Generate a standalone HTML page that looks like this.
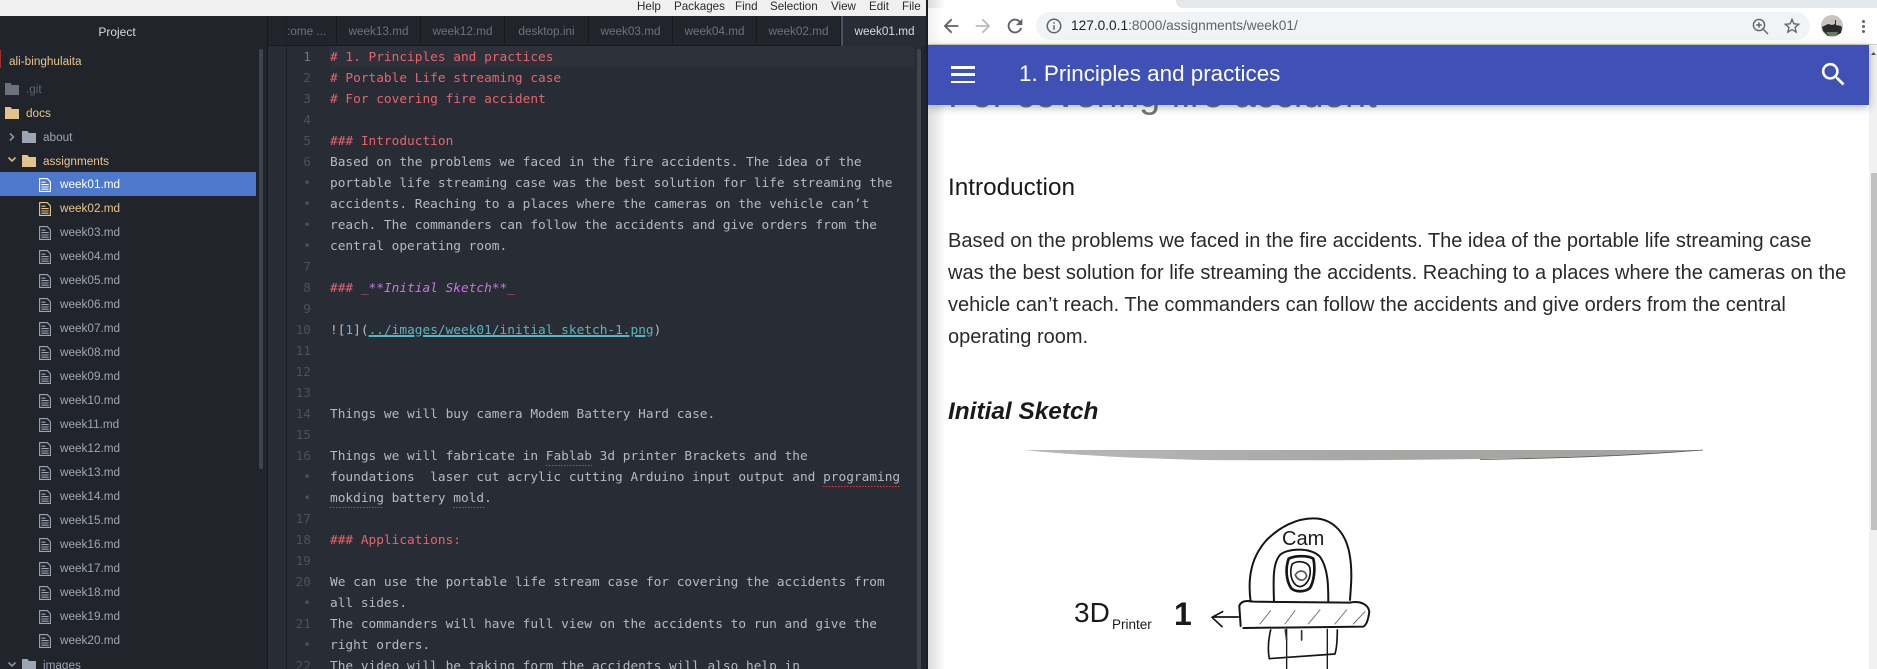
<!DOCTYPE html>
<html><head><meta charset="utf-8"><title>week01</title>
<style>
html,body{margin:0;padding:0;width:1877px;height:669px;overflow:hidden;background:#fff}
*{box-sizing:border-box}
.a{position:absolute}
#root{position:relative;width:1877px;height:669px;overflow:hidden;font-family:"Liberation Sans",sans-serif}
.menu{position:absolute;top:0;height:16px;line-height:13px;font-size:11.6px;color:#2b2b2b;white-space:nowrap}
.tab{position:absolute;top:16px;height:30px;line-height:31px;font-size:11.75px;color:#6b717d;text-align:center;border-right:1px solid #181a1f;white-space:nowrap;overflow:hidden}
.tr{position:absolute;height:24px;line-height:26px;font-size:11.75px;color:#9da5b4;white-space:nowrap}
.tr svg{position:absolute}
#code{position:absolute;left:330px;top:47px;font-family:"DejaVu Sans Mono","Liberation Mono",monospace;font-size:12.8px;line-height:21px;color:#b3bac7;white-space:pre}
#nums{position:absolute;left:287px;top:47px;width:24px;text-align:right;font-family:"DejaVu Sans Mono","Liberation Mono",monospace;font-size:12.8px;line-height:21px;color:#495162;white-space:pre}
.h{color:#e8636e}.p{color:#c678dd}.i{font-style:italic}.l{color:#56b6c2;text-decoration:underline;text-decoration-thickness:2px}.b{color:#61afef}
.s{display:inline-block;height:21px;vertical-align:top;background:repeating-linear-gradient(90deg,#e5383b 0 1.5px,transparent 1.5px 3px) 0 19px/100% 1px no-repeat}
.d{color:#495162;font-size:12.8px}
.ic{position:absolute}
p,h1,h3{margin:0;padding:0}
</style></head><body>
<div id="root">
<svg width="0" height="0" style="position:absolute"><defs>
<symbol id="file" viewBox="0 0 12 14"><path d="M.6.6h7.6l3.2 3.2v9.6H.6z M2.4 4.2h4.2 M2.4 6.6h7.2 M2.4 9h7.2 M2.4 11.2h7.2" fill="none" stroke="currentColor" stroke-width="1.1"/></symbol>
<symbol id="folder" viewBox="0 0 14 12"><path d="M0 0h5.5l1.5 2h7v10H0z" fill="currentColor"/></symbol>
</defs></svg>

<!-- left window -->
<div class="a" style="left:0;top:0;width:926px;height:16px;background:#f0f0f0"></div>
<div class="a" style="left:926px;top:0;width:2px;height:669px;background:#1c1c22"></div>
<div class="menu" style="left:637px">Help</div>
<div class="menu" style="left:674px">Packages</div>
<div class="menu" style="left:735px">Find</div>
<div class="menu" style="left:770px">Selection</div>
<div class="menu" style="left:831px">View</div>
<div class="menu" style="left:869px">Edit</div>
<div class="menu" style="left:902px">File</div>

<div class="a" style="left:0;top:16px;width:267px;height:653px;background:#21252b"></div>
<div class="a" style="left:267px;top:16px;width:659px;height:653px;background:#282c34"></div>
<div class="a" style="left:267px;top:16px;width:659px;height:30px;background:#21252b;border-bottom:1px solid #181a1f"></div>
<div class="a" style="left:267px;top:16px;width:1px;height:653px;background:#181a1f"></div>
<div class="a" style="left:286px;top:16px;width:1px;height:653px;background:#1d2026"></div>
<div class="a" style="left:921px;top:46px;width:5px;height:623px;background:#22252c"></div>

<!-- tabs -->
<div class="tab" style="left:287px;width:50px;text-align:left;text-indent:0"><span style="margin-left:0">:ome ...</span></div>
<div class="tab" style="left:337px;width:84px">week13.md</div>
<div class="tab" style="left:421px;width:84px">week12.md</div>
<div class="tab" style="left:505px;width:84px">desktop.ini</div>
<div class="tab" style="left:589px;width:84px">week03.md</div>
<div class="tab" style="left:673px;width:84px">week04.md</div>
<div class="tab" style="left:757px;width:84px">week02.md</div>
<div class="tab" style="left:841px;width:85px;background:#282c34;color:#d7dae0;border-right:0;border-left:2px solid #4b5263">week01.md</div>

<!-- tree -->
<div class="a" style="left:0;top:16px;width:267px;height:30px;line-height:32px;text-align:center;font-size:12px;color:#d7dae0;padding-right:33px">Project</div>
<div class="a" style="left:0;top:50px;width:1px;height:18px;background:#a03030"></div>
<div class="tr" style="left:9px;top:49px;color:#e8c58a">ali-binghulaita</div>
<div class="a" style="left:259px;top:49px;width:4px;height:420px;background:#3f4550;border-radius:2px"></div>

<svg class="ic" style="left:5px;top:83px;color:#6b717d" width="14" height="12"><use href="#folder"/></svg>
<div class="tr" style="left:26px;top:77px;color:#5c6370">.git</div>
<svg class="ic" style="left:5px;top:107px;color:#e3c28c" width="14" height="12"><use href="#folder"/></svg>
<div class="tr" style="left:26px;top:101px;color:#e8c58a">docs</div>
<svg class="ic" style="left:22px;top:131px;color:#9da5b4" width="14" height="12"><use href="#folder"/></svg>
<svg class="ic" style="left:8px;top:132px" width="8" height="10"><path d="M2 1.5l3.5 3.5L2 8.5" fill="none" stroke="#8a93a3" stroke-width="1.6"/></svg>
<div class="tr" style="left:43px;top:125px">about</div>
<svg class="ic" style="left:22px;top:155px;color:#e3c28c" width="14" height="12"><use href="#folder"/></svg>
<svg class="ic" style="left:7px;top:156px" width="10" height="8"><path d="M1.5 1.5L5 5l3.5-3.5" fill="none" stroke="#d8b878" stroke-width="1.6"/></svg>
<div class="tr" style="left:43px;top:149px;color:#e8c58a">assignments</div>

<div class="a" style="left:0;top:172px;width:256px;height:24px;background:#4d78cc"></div>
<svg class="ic" style="left:39px;top:178px;color:#fff" width="12" height="14"><use href="#file"/></svg>
<div class="tr" style="left:60px;top:172px;color:#fff">week01.md</div>
<svg class="ic" style="left:39px;top:202px;color:#e8c58a" width="12" height="14"><use href="#file"/></svg>
<div class="tr" style="left:60px;top:196px;color:#e8c58a">week02.md</div>
<svg class="ic" style="left:39px;top:226px" width="12" height="14" color="#9da5b4"><use href="#file"/></svg><div class="tr" style="left:60px;top:220px">week03.md</div>
<svg class="ic" style="left:39px;top:250px" width="12" height="14" color="#9da5b4"><use href="#file"/></svg><div class="tr" style="left:60px;top:244px">week04.md</div>
<svg class="ic" style="left:39px;top:274px" width="12" height="14" color="#9da5b4"><use href="#file"/></svg><div class="tr" style="left:60px;top:268px">week05.md</div>
<svg class="ic" style="left:39px;top:298px" width="12" height="14" color="#9da5b4"><use href="#file"/></svg><div class="tr" style="left:60px;top:292px">week06.md</div>
<svg class="ic" style="left:39px;top:322px" width="12" height="14" color="#9da5b4"><use href="#file"/></svg><div class="tr" style="left:60px;top:316px">week07.md</div>
<svg class="ic" style="left:39px;top:346px" width="12" height="14" color="#9da5b4"><use href="#file"/></svg><div class="tr" style="left:60px;top:340px">week08.md</div>
<svg class="ic" style="left:39px;top:370px" width="12" height="14" color="#9da5b4"><use href="#file"/></svg><div class="tr" style="left:60px;top:364px">week09.md</div>
<svg class="ic" style="left:39px;top:394px" width="12" height="14" color="#9da5b4"><use href="#file"/></svg><div class="tr" style="left:60px;top:388px">week10.md</div>
<svg class="ic" style="left:39px;top:418px" width="12" height="14" color="#9da5b4"><use href="#file"/></svg><div class="tr" style="left:60px;top:412px">week11.md</div>
<svg class="ic" style="left:39px;top:442px" width="12" height="14" color="#9da5b4"><use href="#file"/></svg><div class="tr" style="left:60px;top:436px">week12.md</div>
<svg class="ic" style="left:39px;top:466px" width="12" height="14" color="#9da5b4"><use href="#file"/></svg><div class="tr" style="left:60px;top:460px">week13.md</div>
<svg class="ic" style="left:39px;top:490px" width="12" height="14" color="#9da5b4"><use href="#file"/></svg><div class="tr" style="left:60px;top:484px">week14.md</div>
<svg class="ic" style="left:39px;top:514px" width="12" height="14" color="#9da5b4"><use href="#file"/></svg><div class="tr" style="left:60px;top:508px">week15.md</div>
<svg class="ic" style="left:39px;top:538px" width="12" height="14" color="#9da5b4"><use href="#file"/></svg><div class="tr" style="left:60px;top:532px">week16.md</div>
<svg class="ic" style="left:39px;top:562px" width="12" height="14" color="#9da5b4"><use href="#file"/></svg><div class="tr" style="left:60px;top:556px">week17.md</div>
<svg class="ic" style="left:39px;top:586px" width="12" height="14" color="#9da5b4"><use href="#file"/></svg><div class="tr" style="left:60px;top:580px">week18.md</div>
<svg class="ic" style="left:39px;top:610px" width="12" height="14" color="#9da5b4"><use href="#file"/></svg><div class="tr" style="left:60px;top:604px">week19.md</div>
<svg class="ic" style="left:39px;top:634px" width="12" height="14" color="#9da5b4"><use href="#file"/></svg><div class="tr" style="left:60px;top:628px">week20.md</div>
<svg class="ic" style="left:22px;top:659px;color:#9da5b4" width="14" height="12"><use href="#folder"/></svg>
<svg class="ic" style="left:7px;top:661px" width="10" height="8"><path d="M1.5 1.5L5 5l3.5-3.5" fill="none" stroke="#8a93a3" stroke-width="1.6"/></svg>
<div class="tr" style="left:43px;top:653px">images</div>

<!-- editor -->
<div class="a" style="left:330px;top:46px;width:584px;height:21px;background:#2c313a"></div>
<div class="a" style="left:917px;top:49px;width:4px;height:620px;background:#3f4550;border-radius:2px"></div>
<div id="nums"><span style="color:#6f7786">1</span>
2
3
4
5
6
<span class="d">•</span>
<span class="d">•</span>
<span class="d">•</span>
<span class="d">•</span>
7
8
9
10
11
12
13
14
15
16
<span class="d">•</span>
<span class="d">•</span>
17
18
19
20
<span class="d">•</span>
21
<span class="d">•</span>
22</div>
<div id="code"><span class="h"># 1. Principles and practices</span>
<span class="h"># Portable Life streaming case</span>
<span class="h"># For covering fire accident</span>

<span class="h">### Introduction</span>
Based on the problems we faced in the fire accidents. The idea of the
portable life streaming case was the best solution for life streaming the
accidents. Reaching to a places where the cameras on the vehicle can’t
reach. The commanders can follow the accidents and give orders from the
central operating room.

<span class="h">### _</span><span class="p">**</span><span class="p i">Initial Sketch</span><span class="p">**</span><span class="h">_</span>

![<span class="b">1</span>](<span class="l">../images/week01/initial_sketch-1.png</span>)



Things we will buy camera Modem Battery Hard case.

Things we will fabricate in <span class="s">Fablab</span> 3d printer Brackets and the
foundations  laser cut acrylic cutting Arduino input output and <span class="s">programing</span>
<span class="s">mokding</span> battery <span class="s">mold</span>.

<span class="h">### Applications:</span>

We can use the portable life stream case for covering the accidents from
all sides.
The commanders will have full view on the accidents to run and give the
right orders.
The video will be taking form the accidents will also help in</div>

<!-- browser -->
<div class="a" style="left:928px;top:0;width:949px;height:669px;background:#fff;overflow:hidden">
  <div class="a" style="left:0;top:0;width:17px;height:669px;background:linear-gradient(90deg,#dcdcdc,#f2f2f2 70%,#fff)"></div>
  <div class="a" style="left:248px;top:0;width:701px;height:8px;background:#e5e8eb;border-bottom-left-radius:7px"></div>
  <div class="a" style="left:0;top:8px;width:949px;height:36px;background:linear-gradient(90deg,#f0f0f0,#fff 14px)"></div>
  <div class="a" style="left:0;top:44px;width:949px;height:1px;background:#cfcfcf"></div>
  <div class="a" style="left:108px;top:12px;width:774px;height:28px;background:#f1f3f4;border-radius:14px"></div>
  <svg class="a" style="left:12px;top:15px" width="22" height="22" viewBox="0 0 24 24"><path d="M20 11H7.83l5.59-5.59L12 4l-8 8 8 8 1.41-1.41L7.83 13H20z" fill="#5f6368"/></svg>
  <svg class="a" style="left:44px;top:15px" width="22" height="22" viewBox="0 0 24 24"><path d="M12 4l-1.41 1.41L16.17 11H4v2h12.17l-5.58 5.59L12 20l8-8z" fill="#b9bbbe"/></svg>
  <svg class="a" style="left:76px;top:15px" width="22" height="22" viewBox="0 0 24 24"><path d="M17.65 6.35A7.96 7.96 0 0 0 12 4a8 8 0 1 0 7.73 10h-2.08A6 6 0 1 1 12 6c1.66 0 3.14.69 4.22 1.78L13 11h7V4z" fill="#5f6368"/></svg>
  <svg class="a" style="left:117px;top:17px" width="18" height="18" viewBox="0 0 24 24"><path d="M11 7h2v2h-2zm0 4h2v6h-2zm1-9a10 10 0 1 0 0 20 10 10 0 0 0 0-20zm0 18a8 8 0 1 1 0-16 8 8 0 0 1 0 16z" fill="#5f6368"/></svg>
  <div class="a" style="left:143px;top:17px;font-size:13.7px;line-height:18px;color:#5f6368;white-space:nowrap"><span style="color:#202124">127.0.0.1</span>:8000/assignments/week01/</div>
  <svg class="a" style="left:823px;top:17px" width="19" height="19" viewBox="0 0 19 19"><circle cx="8" cy="8" r="5.6" fill="none" stroke="#5f6368" stroke-width="1.4"/><path d="M12 12l5 5M8 5.2v5.6M5.2 8h5.6" stroke="#5f6368" stroke-width="1.4" fill="none"/></svg>
  <svg class="a" style="left:854px;top:16px" width="20" height="20" viewBox="0 0 24 24"><path d="M22 9.24l-7.19-.62L12 2 9.19 8.63 2 9.24l5.46 4.73L5.82 21 12 17.27 18.18 21l-1.63-7.03L22 9.24zM12 15.4l-3.76 2.27 1-4.28-3.32-2.88 4.38-.38L12 6.1l1.71 4.04 4.38.38-3.32 2.88 1 4.28L12 15.4z" fill="#5f6368"/></svg>
  <svg class="a" style="left:893px;top:15px" width="22" height="22" viewBox="0 0 22 22"><circle cx="11" cy="11" r="11" fill="#c9c3c0"/><path d="M1 12l6-3 4 1 3-1v-4l1 0v5l5 1 1 2-1 5-6 3H7l-5-5z" fill="#2a2a2a"/><path d="M5 17h12l-2 4H8z" fill="#6b7a66"/></svg>
  <div class="a" style="left:934px;top:20px;width:3.4px;height:3.4px;border-radius:50%;background:#5f6368"></div>
  <div class="a" style="left:934px;top:25px;width:3.4px;height:3.4px;border-radius:50%;background:#5f6368"></div>
  <div class="a" style="left:934px;top:30px;width:3.4px;height:3.4px;border-radius:50%;background:#5f6368"></div>

  <div class="a" style="left:941px;top:45px;width:8px;height:624px;background:#f1f1f1"></div>
  <div class="a" style="left:943px;top:173px;width:6px;height:357px;background:#c1c1c1"></div>
  <svg class="a" style="left:942px;top:50px" width="7" height="6"><path d="M1 5l2.5-3L6 5z" fill="#505050"/></svg>

  <div class="a" style="left:20px;top:73px;font-size:38.2px;line-height:44px;color:#757575;white-space:nowrap">For covering fire accident</div>
  <div class="a" style="left:0;top:45px;width:941px;height:60px;background:#3f51b5;box-shadow:0 2px 8px rgba(0,0,0,.32)"></div>
  <div class="a" style="left:23px;top:66px;width:24px;height:2.5px;background:#fff"></div>
  <div class="a" style="left:23px;top:73px;width:24px;height:2.5px;background:#fff"></div>
  <div class="a" style="left:23px;top:80.5px;width:24px;height:2.5px;background:#fff"></div>
  <div class="a" style="left:91px;top:60px;font-size:22.4px;line-height:28px;color:#fff;white-space:nowrap">1. Principles and practices</div>
  <svg class="a" style="left:890px;top:59px" width="31" height="31" viewBox="0 0 24 24"><path d="M15.5 14h-.79l-.28-.27A6.471 6.471 0 0 0 16 9.5 6.5 6.5 0 1 0 9.5 16c1.61 0 3.09-.59 4.23-1.57l.27.28v.79l5 4.99L20.49 19l-4.99-5zm-6 0C7.01 14 5 11.99 5 9.5S7.01 5 9.5 5 14 7.01 14 9.5 11.99 14 9.5 14z" fill="#fff"/></svg>

  <div class="a" style="left:20px;top:171px;font-size:24.3px;line-height:34px;color:#1a1a1a;white-space:nowrap">Introduction</div>
  <div class="a" style="left:20px;top:225px;font-size:20px;line-height:32px;color:#2a2a2a;white-space:nowrap">Based on the problems we faced in the fire accidents. The idea of the portable life streaming case<br>was the best solution for life streaming the accidents. Reaching to a places where the cameras on the<br>vehicle can’t reach. The commanders can follow the accidents and give orders from the central<br>operating room.</div>
  <div class="a" style="left:20px;top:395px;font-size:24.4px;line-height:34px;font-weight:bold;font-style:italic;color:#1a1a1a;white-space:nowrap">Initial Sketch</div>
</div>

<!-- sketch -->
<svg class="a" style="left:0;top:0" width="1877" height="669" viewBox="0 0 1877 669">
  <defs><linearGradient id="g" x1="0" x2="1" y1="0" y2="0"><stop offset="0" stop-color="#b8b8b8"/><stop offset=".5" stop-color="#a9a7a5"/><stop offset="1" stop-color="#a5a3a0"/></linearGradient></defs>
  <path d="M1024 450L1703 450Q1640 456 1560 458Q1360 461 1200 460Q1090 457 1024 450Z" fill="url(#g)"/>
  <path d="M1480 459.5Q1600 458 1703 450" fill="none" stroke="#555" stroke-width=".7"/>
  <g transform="translate(1000 500) scale(.3333)" fill="none" stroke="#151515" stroke-width="6" stroke-linecap="round" stroke-linejoin="round">
    <path d="M752 305C742 230 755 170 800 120C840 80 890 55 940 55C1000 55 1040 100 1050 170C1058 220 1052 270 1050 300"/>
    <path d="M822 303C820 240 818 190 840 165C860 145 930 140 960 170C985 205 985 260 985 305"/>
    <path d="M866 176C885 166 925 166 940 176C947 205 942 245 930 264C915 277 885 277 873 264C858 240 856 205 866 176Z" stroke-width="8"/>
    <path d="M876 193C890 180 925 183 930 205C934 230 922 257 900 260C878 257 866 225 876 193Z" stroke-width="5"/>
    <path d="M886 225C895 208 917 210 920 228C915 244 895 246 886 225Z" stroke="#555" stroke-width="5"/>
    <path d="M722 378L718 318C722 305 735 300 760 305L1050 308C1080 302 1105 312 1108 335C1105 360 1100 375 1090 380L730 384" stroke-width="6"/>
    <path d="M780 372L812 332M855 372L885 332M925 372L960 330M1005 372L1040 330M1060 372L1095 335" stroke="#777" stroke-width="3"/>
    <path d="M812 390C805 420 803 450 808 476L1005 462C1012 440 1012 410 1012 390" stroke-width="5"/>
    <path d="M860 388V507M982 388V507" stroke-width="4"/>
    <path d="M856 390L860 420M905 392V420" stroke="#333" stroke-width="5"/>
    <path d="M715 351H642M668 335L636 352L666 380" stroke-width="5"/>
  </g>
  <g font-family="Liberation Sans,sans-serif" fill="#1a1a1a">
    <text x="1282" y="545" font-size="20">Cam</text>
    <text x="1074" y="622" font-size="28">3D</text>
    <text x="1112" y="629" font-size="13.5">Printer</text>
    <text x="1174" y="625" font-size="32" font-weight="bold">1</text>
  </g>
</svg>
</div>
</body></html>
